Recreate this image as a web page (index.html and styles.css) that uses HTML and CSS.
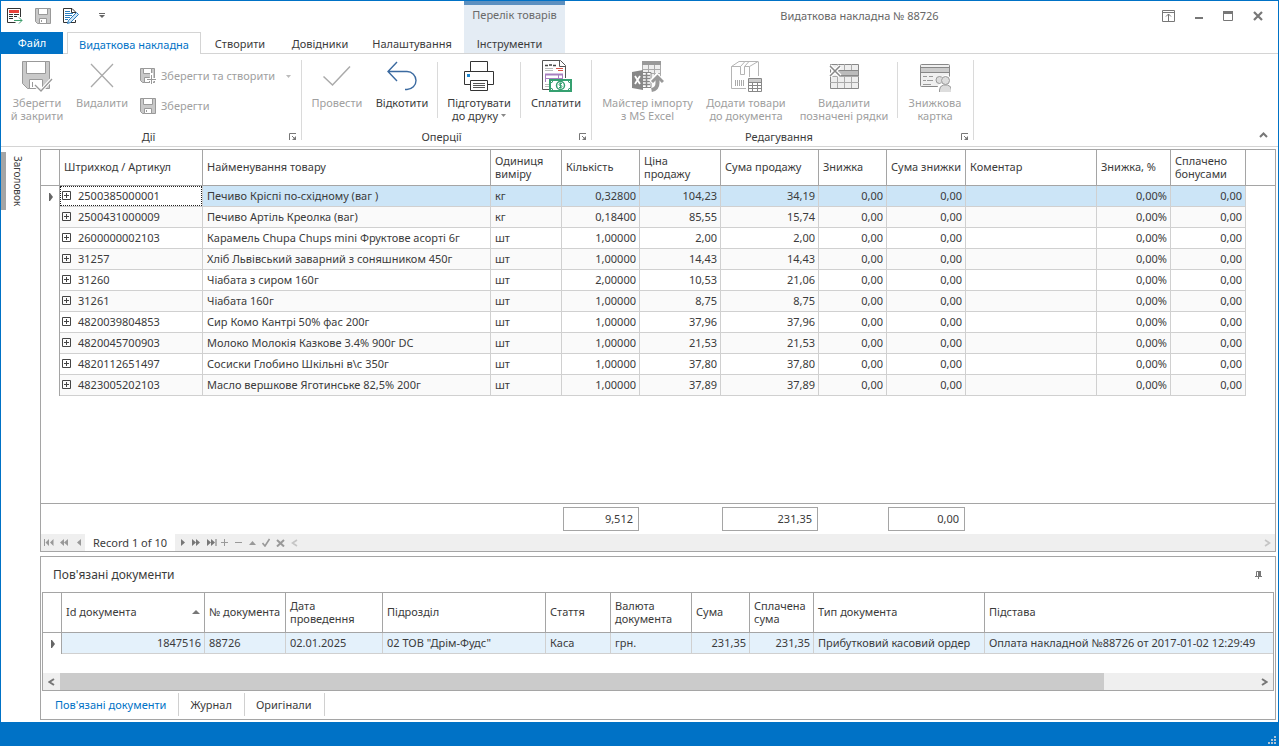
FILE: index.html
```html
<!DOCTYPE html>
<html lang="uk">
<head>
<meta charset="utf-8">
<title>Видаткова накладна № 88726</title>
<link rel="stylesheet" href="styles.css">
</head>
<body>
<svg class="defs" aria-hidden="true">
  <symbol id="plus-box" viewBox="0 0 9 9"><path d="M.5.5h8v8h-8zM2 4.500h5M4.500 2v5" fill="none" stroke="#444"/></symbol>
  <symbol id="launcher" viewBox="0 0 8 8"><path d="M.5 7V.5H7" fill="none" stroke="#777"/><path d="M3 3l3 3" stroke="#777"/><path d="M7 3v4H3z" fill="#777"/></symbol>
  <symbol id="pointer" viewBox="0 0 5 8"><path d="M0 0h1l3 4-3 4H0z" fill="#666"/></symbol>
  <symbol id="floppy" viewBox="0 0 16 16"><path d="M.5.5h15v15h-13l-2-2z" fill="#c9c9c9" stroke="#999"/><path d="M3.500.5h9v6h-9zM4.500 10.500h7v5h-7z" fill="#fff" stroke="#999"/><path d="M6.500 12v2" stroke="#999"/></symbol>
</svg>
<div class="window">
  <header class="top">
    <div class="quick">
      <button aria-label="Закрити документ"><svg width="16" height="16" viewBox="0 0 16 16"><path d="M13.500 9V.5H.5v14h8" fill="none" stroke="#333"/><path d="M2 2h10v3H2z" fill="#e8423b"/><path d="M2 6.500h4M7 6.500h5M2 8.500h4M7 8.500h3M2 10.500h4" stroke="#333"/><path d="M7 12.500h8M12 9.500l3 3-3 3" fill="none" stroke="#3c9d6b"/></svg></button>
      <button aria-label="Зберегти" disabled><svg width="16" height="16"><use href="#floppy"/></svg></button>
      <button aria-label="Редагувати"><svg width="16" height="16" viewBox="0 0 16 16"><path d="M12.500 6V4L9 .5H.5v14h12V12M8.500.5v4h4" fill="none" stroke="#333"/><path d="M2 3.500h5M2 5.500h8M2 7.500h7M2 9.500h5M2 11.500h3" stroke="#2b7fc0"/><path d="M5.500 12.500l8-8 2 2-8 8-3 1z" fill="#cfe4f5" stroke="#2b7fc0"/></svg></button>
      <button aria-label="Налаштувати панель" class="quick-more"><svg width="6" height="5" viewBox="0 0 6 5"><path d="M0 .5h6" stroke="#666"/><path d="M0 2h6L3 5z" fill="#666"/></svg></button>
    </div>
    <nav class="tabs">
      <button class="tab-file">Файл</button>
      <button class="tab tab-active">Видаткова накладна</button>
      <button class="tab tab-create">Створити</button>
      <button class="tab tab-lists">Довідники</button>
      <button class="tab tab-setup">Налаштування</button>
    </nav>
    <div class="context">
      <span class="context-title">Перелік товарів</span>
      <button class="context-tab">Інструменти</button>
    </div>
    <div class="title">Видаткова накладна № 88726</div>
    <div class="controls">
      <button aria-label="Параметри стрічки"><svg width="13" height="12" viewBox="0 0 13 12"><path d="M.5.5h12v11H.5zM0 2.500h13M6.500 4v7M4 6.500L6.500 4 9 6.500" fill="none" stroke="#777"/></svg></button>
      <button aria-label="Згорнути"><svg width="8" height="8" viewBox="0 0 8 8"><path d="M0 6h8" stroke="#777" stroke-width="2"/></svg></button>
      <button aria-label="Розгорнути"><svg width="10" height="10" viewBox="0 0 10 10"><path d="M.5.5h9v9h-9z" fill="none" stroke="#777"/><path d="M0 0h10v3H0z" fill="#777"/></svg></button>
      <button aria-label="Закрити"><svg width="10" height="10" viewBox="0 0 10 10"><path d="M1 1l8 8M9 1L1 9" stroke="#777" stroke-width="2.200"/></svg></button>
    </div>
  </header>

  <section class="ribbon">
    <div class="group group-actions">
      <div class="items">
        <button class="big w58" disabled><svg width="32" height="32" viewBox="0 0 32 32"><path d="M1.500 1.500h27v27H6.500l-5-5z" fill="#c9c9c9" stroke="#999"/><path d="M5.500 1.500h19v12h-19zM8.500 19.500h13v9h-13z" fill="#fff" stroke="#999"/><path d="M11.500 22v5" stroke="#999"/><path d="M14 25l6 6 11-12" fill="none" stroke="#fff" stroke-width="3.500"/><path d="M14 25l6 6 11-12" fill="none" stroke="#999" stroke-width="1.300"/></svg><span>Зберегти<br>й закрити</span></button>
        <button class="big w72" disabled><svg width="32" height="32" viewBox="0 0 32 32"><path d="M5 4l22 23M27 4L5 27" fill="none" stroke="#aaa" stroke-width="1.300"/></svg><span>Видалити</span></button>
        <div class="stack">
          <button class="small" disabled><svg width="16" height="16" viewBox="0 0 16 16"><path d="M.5.500h14v14h-12l-2-2z" fill="#c9c9c9" stroke="#999"/><path d="M3.500.5h8v5h-8zM4.500 9.500h5v5h-5z" fill="#fff" stroke="#999"/><path d="M11.500 5v11M6 11.500h10" stroke="#fff" stroke-width="3"/><path d="M11.500 7v9M7 11.500h9" stroke="#999"/></svg><span>Зберегти та створити</span><svg class="caret" width="5" height="3" viewBox="0 0 5 3"><path d="M0 0h5L2.500 3z" fill="#bbb"/></svg></button>
          <button class="small" disabled><svg width="16" height="16"><use href="#floppy"/></svg><span>Зберегти</span></button>
        </div>
      </div>
      <div class="caption"><span>Дії</span><button aria-label="Дії: параметри"><svg width="8" height="8"><use href="#launcher"/></svg></button></div>
    </div>
    <div class="group group-ops">
      <div class="items">
        <button class="big w66" disabled><svg width="32" height="32" viewBox="0 0 32 32"><path d="M2.500 16.500l9 8.500L29 6.500" fill="none" stroke="#aaa" stroke-width="1.500"/></svg><span>Провести</span></button>
        <button class="big w64"><svg width="32" height="32" viewBox="0 0 32 32"><path d="M11 2L2 11.500 11 21M2 11.500h19a9 9 0 0 1 0 18h-2" fill="none" stroke="#3b6aa0" stroke-width="1.400"/></svg><span>Відкотити</span></button>
        <i class="rule"></i>
        <button class="big w82"><svg width="32" height="32" viewBox="0 0 32 32"><path d="M7.500 11V1.500h17V11M7.500 24.500H1.500v-13h29v13h-6" fill="#fff" stroke="#333"/><path d="M7.500 20.500h17v10h-17z" fill="#fff" stroke="#333"/><path d="M4 14h3v3H4z" fill="#1a86d0"/><path d="M10 23.500h12M10 25.500h12M10 27.500h12" stroke="#555"/></svg><span>Підготувати<br>до друку <svg width="5" height="3" viewBox="0 0 5 3"><path d="M0 0h5L2.500 3z" fill="#888"/></svg></span></button>
        <i class="rule"></i>
        <button class="big w70"><svg width="32" height="32" viewBox="0 0 32 32"><path d="M9 29.500H2.500v-29h18l5 5V18M19.500.5v6h6" fill="#fff" stroke="#555"/><path d="M5 5.500h3M9 5h3M13 5.500h3" fill="none" stroke="#444" stroke-width="1.500"/><path d="M5 8.500h8M5 10.500h8" stroke="#bbb"/><path d="M16 8.500h7M18 10.500h5" stroke="#d9534a"/><path d="M5.500 14.500h17v8M5.500 22v-8M5 18.500h17M18.500 15v4M10.500 19v5" fill="none" stroke="#a77fc0"/><path d="M5 14.500h18" stroke="#a77fc0" stroke-width="2"/><path d="M5 24.500h4M5 26.500h4" stroke="#bbb"/><path d="M10 20h21v11H10z" fill="#fff" stroke="#35a070" stroke-width="2"/><path d="M10 23a3 3 0 0 0 3-3M28 20a3 3 0 0 0 3 3M10 28a3 3 0 0 1 3 3M28 31a3 3 0 0 1 3-3" stroke="#35a070" fill="none"/><circle cx="20.500" cy="25.500" r="4" fill="none" stroke="#35a070" stroke-width="1.500"/><path d="M22 23.500h-2q-1 0-1 1t1 1h1q1 0 1 1t-1 1h-2M20.500 22.500v6" fill="none" stroke="#35a070"/></svg><span>Сплатити</span></button>
      </div>
      <div class="caption"><span>Оперції</span><button aria-label="Оперції: параметри"><svg width="8" height="8"><use href="#launcher"/></svg></button></div>
    </div>
    <div class="group group-edit">
      <div class="items">
        <button class="big w101" disabled><svg width="32" height="32" viewBox="0 0 32 32"><path d="M10.500 1.500h18v17h-18z" fill="#eee" stroke="#aaa"/><path d="M10 1h19v4H10z" fill="#999"/><path d="M10 9.500h18M10 13.500h18M16.500 5v13M22.500 5v13" stroke="#aaa"/><path d="M10 12.500h9v15h-9z" fill="#fff" stroke="#888"/><path d="M11 15.500h7M11 18.500h7M11 21.500h7M11 24.500h7M14.500 13v14" stroke="#888" stroke-width="1.500"/><path d="M0 12l11-2v20L0 28z" fill="#888"/><path d="M3 16l5 8M8 16l-5 8" stroke="#fff" stroke-width="1.800"/><path d="M19 22.500l6-6.500 6 6.500" fill="none" stroke="#fff" stroke-width="5"/><path d="M20 22l5.500-5.500L31 22" fill="none" stroke="#999" stroke-width="3"/><path d="M25.500 17v6q0 6-6 7" fill="none" stroke="#999" stroke-width="4"/></svg><span>Майстер імпорту<br>з MS Excel</span></button>
        <button class="big w96" disabled><svg width="32" height="32" viewBox="0 0 32 32"><path d="M16 28.500H1.500v-22h18V17M1.500 6.500L9 1.500h19l-8.500 5M28.500 1.500V16" fill="none" stroke="#b5b5b5"/><path d="M10.500 6.500L15 1.500h4l-4.500 5v8h-4z" fill="#fff" stroke="#b5b5b5"/><path d="M5.500 20v6M7.500 20v6M9.500 20v6M11.500 20v6M13.500 20v6" stroke="#aaa"/><path d="M18.500 18.500h13v13h-13z" fill="#fff" stroke="#888"/><path d="M19 19h12v3H19z" fill="#ccc"/><path d="M18 22.500h14M18 25.500h14M18 28.500h14M22.500 22v10M27.500 22v10" stroke="#888"/></svg><span>Додати товари<br>до документа</span></button>
        <button class="big w100" disabled><svg width="32" height="32" viewBox="0 0 32 32"><path d="M2.500 4.500h28v24h-28z" fill="#eee" stroke="#888"/><path d="M2 16.500h29M2 22.500h29M9.500 4v24M16.500 4v24M23.500 4v24" stroke="#aaa"/><path d="M10 10.500h20.500v5H10z" fill="#bbb" stroke="#888"/><path d="M2 6l10 10M12 6L2 16" stroke="#fff" stroke-width="4"/><path d="M2 6l10 10M12 6L2 16" stroke="#888" stroke-width="1.500"/></svg><span>Видалити<br>позначені рядки</span></button>
        <i class="rule"></i>
        <button class="big w74" disabled><svg width="32" height="32" viewBox="0 0 32 32"><rect x="1.500" y="4.500" width="29" height="22" rx="1" fill="#f0f0f0" stroke="#888"/><path d="M2 8h28v4H2z" fill="#ccc"/><path d="M2 7.500h28M2 12.500h28" stroke="#888"/><path d="M4 16.500h4M10 16.500h4M4 20.500h3M8 20.500h6M4 24.500h8" stroke="#999"/><circle cx="20.500" cy="20" r="3.500" fill="#ddd" stroke="#999"/><path d="M19 32v-2q0-5 5-6l-1-4a4 4 0 0 1 8 0l-1 4q3 1 3 6v2z" fill="#fff" stroke="#fff" stroke-width="2"/><path d="M20.500 32v-2q0-4 4-5h4q4 1 4 5v2" fill="#ddd" stroke="#999"/><circle cx="26.500" cy="20.500" r="4" fill="#ddd" stroke="#999"/></svg><span>Знижкова<br>картка</span></button>
      </div>
      <div class="caption"><span>Редагування</span><button aria-label="Редагування: параметри"><svg width="8" height="8"><use href="#launcher"/></svg></button></div>
    </div>
    <button class="collapse" aria-label="Згорнути стрічку"><svg width="9" height="6" viewBox="0 0 9 6"><path d="M1 5l3.500-3.500L8 5" fill="none" stroke="#777" stroke-width="2"/></svg></button>
  </section>

  <div class="body">
    <aside class="side"><button class="side-tab">Заголовок</button></aside>
    <main class="main">
      <section class="panel goods">
        <table class="grid">
          <colgroup><col class="c19"><col class="c143"><col class="c288"><col class="c71"><col class="c78"><col class="c81"><col class="c98"><col class="c68"><col class="c79"><col class="c131"><col class="c74"><col class="c75"><col></colgroup>
          <thead><tr><th></th><th>Штрихкод / Артикул</th><th>Найменування товару</th><th>Одиниця виміру</th><th>Кількість</th><th>Ціна продажу</th><th>Сума продажу</th><th>Знижка</th><th class="tight">Сума знижки</th><th>Коментар</th><th>Знижка, %</th><th>Сплачено бонусами</th><th class="rest"></th></tr></thead>
          <tbody>
            <tr class="current"><td class="ind"><svg width="5" height="8"><use href="#pointer"/></svg></td><td class="code"><div class="focus"><button aria-label="Розгорнути"><svg width="9" height="9"><use href="#plus-box"/></svg></button>2500385000001</div></td><td>Печиво Кріспі по-східному (ваг )</td><td>кг</td><td class="n">0,32800</td><td class="n">104,23</td><td class="n">34,19</td><td class="n">0,00</td><td class="n">0,00</td><td></td><td class="n">0,00%</td><td class="n">0,00</td><td class="rest"></td></tr>
            <tr><td class="ind"></td><td class="code"><div><button aria-label="Розгорнути"><svg width="9" height="9"><use href="#plus-box"/></svg></button>2500431000009</div></td><td>Печиво Артіль Креолка (ваг)</td><td>кг</td><td class="n">0,18400</td><td class="n">85,55</td><td class="n">15,74</td><td class="n">0,00</td><td class="n">0,00</td><td></td><td class="n">0,00%</td><td class="n">0,00</td><td class="rest"></td></tr>
            <tr><td class="ind"></td><td class="code"><div><button aria-label="Розгорнути"><svg width="9" height="9"><use href="#plus-box"/></svg></button>2600000002103</div></td><td>Карамель Chupa Chups mini Фруктове асорті 6г</td><td>шт</td><td class="n">1,00000</td><td class="n">2,00</td><td class="n">2,00</td><td class="n">0,00</td><td class="n">0,00</td><td></td><td class="n">0,00%</td><td class="n">0,00</td><td class="rest"></td></tr>
            <tr><td class="ind"></td><td class="code"><div><button aria-label="Розгорнути"><svg width="9" height="9"><use href="#plus-box"/></svg></button>31257</div></td><td>Хліб Львівський заварний з соняшником 450г</td><td>шт</td><td class="n">1,00000</td><td class="n">14,43</td><td class="n">14,43</td><td class="n">0,00</td><td class="n">0,00</td><td></td><td class="n">0,00%</td><td class="n">0,00</td><td class="rest"></td></tr>
            <tr><td class="ind"></td><td class="code"><div><button aria-label="Розгорнути"><svg width="9" height="9"><use href="#plus-box"/></svg></button>31260</div></td><td>Чіабата з сиром 160г</td><td>шт</td><td class="n">2,00000</td><td class="n">10,53</td><td class="n">21,06</td><td class="n">0,00</td><td class="n">0,00</td><td></td><td class="n">0,00%</td><td class="n">0,00</td><td class="rest"></td></tr>
            <tr><td class="ind"></td><td class="code"><div><button aria-label="Розгорнути"><svg width="9" height="9"><use href="#plus-box"/></svg></button>31261</div></td><td>Чіабата 160г</td><td>шт</td><td class="n">1,00000</td><td class="n">8,75</td><td class="n">8,75</td><td class="n">0,00</td><td class="n">0,00</td><td></td><td class="n">0,00%</td><td class="n">0,00</td><td class="rest"></td></tr>
            <tr><td class="ind"></td><td class="code"><div><button aria-label="Розгорнути"><svg width="9" height="9"><use href="#plus-box"/></svg></button>4820039804853</div></td><td>Сир Комо Кантрі 50% фас 200г</td><td>шт</td><td class="n">1,00000</td><td class="n">37,96</td><td class="n">37,96</td><td class="n">0,00</td><td class="n">0,00</td><td></td><td class="n">0,00%</td><td class="n">0,00</td><td class="rest"></td></tr>
            <tr><td class="ind"></td><td class="code"><div><button aria-label="Розгорнути"><svg width="9" height="9"><use href="#plus-box"/></svg></button>4820045700903</div></td><td>Молоко Молокія Казкове 3.4% 900г DC</td><td>шт</td><td class="n">1,00000</td><td class="n">21,53</td><td class="n">21,53</td><td class="n">0,00</td><td class="n">0,00</td><td></td><td class="n">0,00%</td><td class="n">0,00</td><td class="rest"></td></tr>
            <tr><td class="ind"></td><td class="code"><div><button aria-label="Розгорнути"><svg width="9" height="9"><use href="#plus-box"/></svg></button>4820112651497</div></td><td>Сосиски Глобино Шкільні в\с 350г</td><td>шт</td><td class="n">1,00000</td><td class="n">37,80</td><td class="n">37,80</td><td class="n">0,00</td><td class="n">0,00</td><td></td><td class="n">0,00%</td><td class="n">0,00</td><td class="rest"></td></tr>
            <tr><td class="ind"></td><td class="code"><div><button aria-label="Розгорнути"><svg width="9" height="9"><use href="#plus-box"/></svg></button>4823005202103</div></td><td>Масло вершкове Яготинське 82,5% 200г</td><td>шт</td><td class="n">1,00000</td><td class="n">37,89</td><td class="n">37,89</td><td class="n">0,00</td><td class="n">0,00</td><td></td><td class="n">0,00%</td><td class="n">0,00</td><td class="rest"></td></tr>
          </tbody>
        </table>
        <div class="totals"><output class="t-qty">9,512</output><output class="t-sum">231,35</output><output class="t-disc">0,00</output></div>
        <div class="navigator">
          <div class="nav-left">
            <button aria-label="Перший"><svg width="10" height="7" viewBox="0 0 10 7"><path d="M0 0h1v7H0zM5 0v7L1.500 3.500zM9.500 0v7L6 3.500z" fill="#999"/></svg></button>
            <button aria-label="Попередня сторінка"><svg width="8" height="7" viewBox="0 0 8 7"><path d="M4 0v7L0 3.500zM8 0v7L4 3.500z" fill="#999"/></svg></button>
            <button aria-label="Попередній"><svg width="4" height="7" viewBox="0 0 4 7"><path d="M4 0v7L0 3.500z" fill="#999"/></svg></button>
          </div>
          <span class="record">Record 1 of 10</span>
          <div class="nav-right">
            <button aria-label="Наступний"><svg width="4" height="7" viewBox="0 0 4 7"><path d="M0 0v7l4-3.500z" fill="#777"/></svg></button>
            <button aria-label="Наступна сторінка"><svg width="8" height="7" viewBox="0 0 8 7"><path d="M0 0v7l4-3.500zM4 0v7l4-3.500z" fill="#777"/></svg></button>
            <button aria-label="Останній"><svg width="10" height="7" viewBox="0 0 10 7"><path d="M0 0v7l4-3.500zM4 0v7l4-3.500zM8.500 0h1v7h-1z" fill="#777"/></svg></button>
            <button aria-label="Додати"><svg width="7" height="7" viewBox="0 0 7 7"><path d="M0 3.500h7M3.500 0v7" stroke="#999"/></svg></button>
            <button aria-label="Вилучити"><svg width="7" height="7" viewBox="0 0 7 7"><path d="M0 3.500h7" stroke="#999"/></svg></button>
            <button aria-label="Редагувати"><svg width="7" height="4" viewBox="0 0 7 4"><path d="M0 4h7L3.500 0z" fill="#999"/></svg></button>
            <button aria-label="Застосувати"><svg width="8" height="9" viewBox="0 0 8 9"><path d="M.5 5l2.500 3L7.500 1" fill="none" stroke="#999" stroke-width="1.600"/></svg></button>
            <button aria-label="Скасувати"><svg width="9" height="8" viewBox="0 0 9 8"><path d="M1 1l7 6.500M8 1L1 7.500" stroke="#999" stroke-width="2"/></svg></button>
          </div>
          <div class="scroll scroll-off">
            <button aria-label="Ліворуч"><svg width="7" height="8" viewBox="0 0 7 8"><path d="M6 1L1.500 4 6 7" fill="none" stroke="#c5c5c5" stroke-width="1.600"/></svg></button>
            <button aria-label="Праворуч"><svg width="7" height="8" viewBox="0 0 7 8"><path d="M1 1l4.500 3L1 7" fill="none" stroke="#c5c5c5" stroke-width="1.600"/></svg></button>
          </div>
        </div>
      </section>

      <section class="panel linked">
        <header class="panel-head"><h2>Пов'язані документи</h2><button aria-label="Закріпити"><svg width="7" height="8" viewBox="0 0 7 8"><path d="M1.500 5V.5h4V5M0 5.500h7M3.500 6v2" fill="none" stroke="#777"/><path d="M3 0h3v5H3z" fill="#777"/></svg></button></header>
        <div class="inner">
          <table class="grid docs">
            <colgroup><col class="c19"><col class="c143"><col class="c81"><col class="c97"><col class="c163"><col class="c65"><col class="c81"><col class="c58"><col class="c64"><col class="c171"><col></colgroup>
            <thead><tr><th></th><th><div class="sorted">Id документа<svg width="8" height="4" viewBox="0 0 8 4"><path d="M0 4h8L4 0z" fill="#777"/></svg></div></th><th>№ документа</th><th>Дата проведення</th><th>Підрозділ</th><th>Стаття</th><th>Валюта документа</th><th>Сума</th><th>Сплачена сума</th><th>Тип документа</th><th class="rest">Підстава</th></tr></thead>
            <tbody><tr class="current"><td class="ind"><svg width="5" height="8"><use href="#pointer"/></svg></td><td class="n">1847516</td><td>88726</td><td>02.01.2025</td><td>02 ТОВ "Дрім-Фудс"</td><td>Каса</td><td>грн.</td><td class="n">231,35</td><td class="n">231,35</td><td>Прибутковий касовий ордер</td><td class="last">Оплата накладной №88726 от 2017-01-02 12:29:49</td></tr></tbody>
          </table>
          <div class="scroll scroll-on">
            <button aria-label="Ліворуч"><svg width="7" height="8" viewBox="0 0 7 8"><path d="M6 1L1.500 4 6 7" fill="none" stroke="#777" stroke-width="2"/></svg></button>
            <div class="track"><div class="thumb"></div></div>
            <button aria-label="Праворуч"><svg width="7" height="8" viewBox="0 0 7 8"><path d="M1 1l4.500 3L1 7" fill="none" stroke="#777" stroke-width="2"/></svg></button>
          </div>
        </div>
        <nav class="bottom-tabs">
          <button class="on">Пов'язані документи</button>
          <button>Журнал</button>
          <button>Оригінали</button>
        </nav>
      </section>
    </main>
  </div>
  <footer class="status"><svg width="9" height="9" viewBox="0 0 9 9"><path d="M7 1h2v2H7zM4 4h2v2H4zM7 4h2v2H7zM1 7h2v2H1zM4 7h2v2H4zM7 7h2v2H7z" fill="#b0c4d4"/></svg></footer>
</div>
</body>
</html>
```

FILE: styles.css
```css
* { box-sizing: border-box; }
body {
  margin: 0;
  background: #fff;
  color: #3b3b3b;
  font: 11px/13px "Noto Sans", "Open Sans", sans-serif;
}
.defs { position: absolute; width: 0; height: 0; }
button {
  margin: 0;
  padding: 0;
  border: 0;
  background: none;
  color: inherit;
  font: inherit;
}
svg { display: block; flex: none; }

.window {
  min-height: 100vh;
  display: flex;
  flex-direction: column;
  border: solid #0072c6;
  border-width: 1px 1px 0;
}

/* Title bar and ribbon tabs */
.top {
  display: grid;
  grid-template: 31px 22px / 463px 101px 1fr auto;
}
.quick { display: flex; align-items: center; gap: 12px; padding: 0 0 2px 6px; }
.quick-more { margin-left: 8px; }
.tabs {
  grid-row: 2;
  display: flex;
  box-shadow: inset 0 -1px #d4d4d4;
}
.tab-file { width: 62px; padding-bottom: 1px; background: #0072c6; color: #fff; }
.tab { padding-top: 1px; }
.tab-active {
  width: 134px;
  margin-left: 4px;
  border: 1px solid #d4d4d4;
  border-bottom: 0;
  background: #fff;
  color: #0072c6;
}
.tab-create { width: 78px; }
.tab-lists { width: 82px; }
.tab-setup { width: 102px; }
.context {
  grid-area: 1 / 2 / 3 / 3;
  display: flex;
  flex-direction: column;
  justify-content: space-between;
  border-top: 4px solid #5c90c0;
  border-bottom: 1px solid #d4d4d4;
  background: #e4ecf4;
}
.context-title { padding-top: 3px; text-align: center; color: #6a6a6a; }
.context-tab { width: 91px; height: 20px; }
.title { display: flex; align-items: center; justify-content: center; padding: 0 8px 2px 0; color: #666; }
.controls { display: flex; align-items: center; gap: 20px; padding: 0 15px 1px 0; }
.top::after { content: ""; grid-area: 2 / 3 / 3 / 5; border-bottom: 1px solid #d4d4d4; }

/* Ribbon */
.ribbon { display: flex; height: 93px; border-bottom: 1px solid #d4d4d4; }
.group { display: flex; flex-direction: column; margin: 6px 0; border-right: 1px solid #dadada; }
.group-actions { width: 301px; padding-left: 7px; }
.group-ops { width: 290px; padding-left: 2px; }
.group-edit { width: 382px; padding-left: 5px; }
.items { flex: 1; display: flex; }
.big { display: flex; flex-direction: column; align-items: center; gap: 4px; white-space: nowrap; }
.big span svg { display: inline-block; vertical-align: 3px; }
.big:disabled, .small:disabled { color: #a0a0a0; }
.w58 { width: 58px; }
.w64 { width: 64px; }
.w66 { width: 66px; }
.w70 { width: 70px; }
.w72 { width: 72px; }
.w74 { width: 74px; }
.w82 { width: 82px; }
.w96 { width: 96px; }
.w100 { width: 100px; }
.w101 { width: 101px; }
.rule { width: 1px; margin: 2px 0 12px 3px; background: #dadada; }
.w82 + .rule { margin-left: 0; }
.stack { display: flex; flex-direction: column; gap: 14px; padding: 8px 0 0 2px; }
.small { display: flex; align-items: center; gap: 5px; }
.small span { padding-bottom: 1px; }
.caret { margin-left: 6px; }
.caption { display: flex; align-items: flex-start; height: 10px; }
.caption span { flex: 1; text-align: center; }
.caption button { padding: 3px 4px 0 0; }
.collapse { margin: auto 10px 8px auto; }

/* Work area */
.body { flex: 1; display: flex; }
.side { width: 39px; padding-top: 5px; }
.side-tab {
  padding: 4px 0;
  border-left: 5px solid #a5a5a5;
  padding-left: 4px;
  writing-mode: vertical-rl;
  line-height: 16px;
  font-size: 10px;
}
.main { flex: 1; min-width: 0; display: flex; flex-direction: column; gap: 4px; padding: 2px 2px 2px 0; }
.panel { display: flex; flex-direction: column; border: 1px solid #a5a5a5; }
.goods { flex: 1; }

.grid { width: 100%; table-layout: fixed; border-spacing: 0; }
.grid th {
  height: 36px;
  padding: 0 4px 2px;
  border: solid #a5a5a5;
  border-width: 0 1px 1px 0;
  text-align: left;
  font-weight: normal;
}
.grid th.rest { border-right: 0; }
.grid th.tight { padding-right: 0; white-space: nowrap; }
.grid td {
  height: 21px;
  padding: 0 4px 2px;
  border: solid #d0d0d0;
  border-width: 0 1px 1px 0;
  white-space: nowrap;
}
.grid td.n { padding-right: 3px; text-align: right; }
.grid td.ind { padding: 0 0 0 8px; border-bottom: 0; border-right-color: #a5a5a5; background: #fff; }
.grid td.rest { border: 0; background: #fff; }
.grid td.code { padding: 0; }
.code div { display: flex; align-items: center; gap: 7px; height: 20px; padding: 0 0 2px 2px; }
.code .focus { background: #fff; outline: 1px dotted #222; outline-offset: -1px; }
.grid tr:nth-child(even) td { background: #fafafa; }
.grid tr:nth-child(even) td.ind, .grid tr:nth-child(even) td.rest { background: #fff; }
.current td { background: #cce5f7; }
.c19 { width: 19px; }
.c58 { width: 58px; }
.c64 { width: 64px; }
.c65 { width: 65px; }
.c68 { width: 68px; }
.c71 { width: 71px; }
.c74 { width: 74px; }
.c75 { width: 75px; }
.c78 { width: 78px; }
.c79 { width: 79px; }
.c81 { width: 81px; }
.c97 { width: 97px; }
.c98 { width: 98px; }
.c131 { width: 131px; }
.c143 { width: 143px; }
.c163 { width: 163px; }
.c171 { width: 171px; }
.c288 { width: 288px; }

.totals {
  display: grid;
  grid-template-columns: 521px 78px 81px 98px 68px 79px;
  margin-top: auto;
  padding: 3px 0;
  border-top: 1px solid #a5a5a5;
}
.totals output { height: 24px; margin: 0 1px; padding: 0 5px; border: 1px solid #a5a5a5; line-height: 22px; text-align: right; }
.t-qty { grid-column: 2; }
.t-sum { grid-column: 4; }
.t-disc { grid-column: 6; }

.navigator { display: flex; height: 17px; }
.nav-left, .nav-right { display: flex; align-items: center; background: #efefef; }
.nav-left { width: 44px; gap: 6px; padding-left: 3px; }
.nav-left button:last-child { margin-left: 3px; }
.record { width: 90px; line-height: 17px; text-align: center; }
.nav-right { width: 112px; gap: 7px; padding-left: 6px; }
.nav-right button:nth-child(3) { margin-right: -3px; }
.nav-right button:nth-child(n+7) { margin-left: -1px; }
.scroll { display: flex; align-items: center; background: #efefef; }
.scroll-off { flex: 1; justify-content: space-between; padding: 0 4px; }

/* Linked documents */
.panel-head { display: flex; align-items: center; justify-content: space-between; height: 35px; padding: 0 13px 0 12px; }
.panel-head h2 { margin: 0; font-size: 12px; font-weight: normal; line-height: 16px; }
.inner { margin: 0 1px; border: 1px solid #a5a5a5; }
.docs th { height: 40px; }
.docs .current td { background: #e4f1fb; }
.docs .current td.ind { background: #fff; }
.docs td.last { border-right: 0; }
.sorted { display: flex; align-items: center; justify-content: space-between; }
.scroll-on { margin-top: 19px; height: 17px; }
.scroll-on button { width: 17px; padding-left: 5px; }
.track { flex: 1; height: 100%; }
.thumb { width: calc(100% - 152px); height: 100%; background: #cbcbcb; }
.bottom-tabs { display: flex; height: 28px; padding: 2px 0 3px 2px; }
.bottom-tabs button { padding: 0 12px 0 11px; border-right: 1px solid #d0d0d0; }
.bottom-tabs .on { padding: 0 12px; color: #0072c6; }

.status { display: flex; justify-content: flex-end; align-items: flex-end; height: 24px; padding: 0 2px 2px 0; background: #0072c6; }
```
